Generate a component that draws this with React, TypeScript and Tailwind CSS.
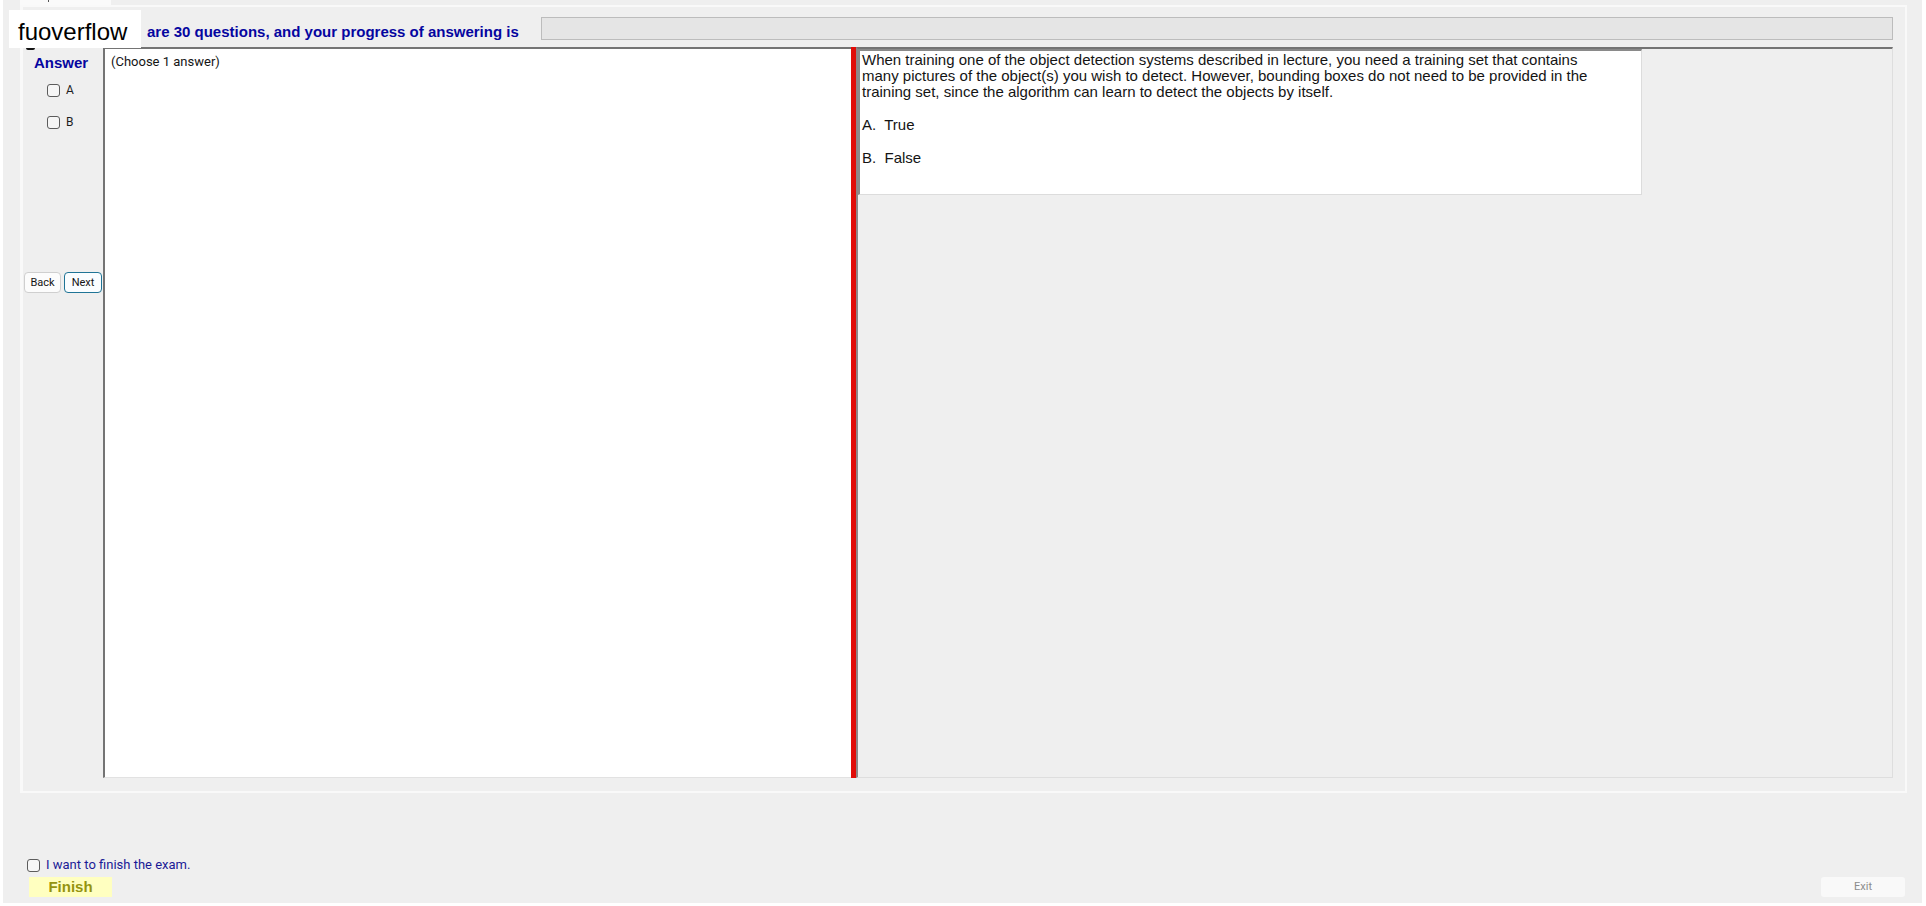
import { useState } from 'react';

const choices = ['A', 'B'];

const checkboxClass =
  'size-[13px] shrink-0 appearance-none rounded-[3px] border border-[#5c5c5c] bg-[#f6f6f6] checked:bg-[#0067c0]';

function AnswerColumn() {
  const [selected, setSelected] = useState<string[]>([]);

  const toggle = (choice: string) => {
    setSelected((prev) =>
      prev.includes(choice) ? prev.filter((c) => c !== choice) : [...prev, choice]
    );
  };

  return (
    <aside className="flex w-20 shrink-0 flex-col">
      <h2 className="mt-2 pl-[11px] text-[15px] leading-4 font-bold text-[#0505a0]">Answer</h2>
      <div className="mt-[11px] flex flex-col gap-4 pl-6">
        {choices.map((choice) => (
          <label
            key={choice}
            className="flex h-4 items-center gap-[6px] font-['Roboto',sans-serif] text-xs text-[#1e1e1e]"
          >
            <input
              type="checkbox"
              className={checkboxClass}
              checked={selected.includes(choice)}
              onChange={() => toggle(choice)}
            />
            {choice}
          </label>
        ))}
      </div>
      <div className="mt-[142px] flex gap-[3px] pl-px font-['Roboto',sans-serif] text-[11px] leading-5 text-[#141414]">
        <button className="h-[21px] w-[37px] rounded-[4px] border border-[#cfcfcf] bg-[#fcfcfc]">
          Back
        </button>
        <button className="h-[21px] w-[38px] rounded-[4px] border border-[#1f7496] bg-[#fafdff]">
          Next
        </button>
      </div>
    </aside>
  );
}

function Question() {
  return (
    <article className="w-[784px] max-w-full border-t-2 border-r border-b border-l-2 border-t-[#8a8a8a] border-r-[#dcdcdc] border-b-[#dcdcdc] border-l-[#8a8a8a] bg-white pb-7 pl-[2px] text-[15px] leading-4 text-[#141414]">
      <p className="pt-px">
        When training one of the object detection systems described in lecture, you need a training set that contains
        <br />
        many pictures of the object(s) you wish to detect. However, bounding boxes do not need to be provided in the
        <br />
        training set, since the algorithm can learn to detect the objects by itself.
      </p>
      <p className="mt-[17px] whitespace-pre">A.  True</p>
      <p className="mt-[17px] whitespace-pre">B.  False</p>
    </article>
  );
}

export default function App() {
  const [finish, setFinish] = useState(false);

  return (
    <div className="flex min-h-screen flex-col bg-white pr-1 pb-[3px] pl-[3px] font-['Liberation_Sans',Arial,sans-serif]">
      <div className="relative flex flex-1 flex-col bg-[#efefef] pr-[15px] pl-[17px]">
        {/* selected tab, scrolled almost out of view */}
        <div className="flex h-[5px] w-[91px] bg-[#fafafa] pl-7">
          <span className="h-[2px] w-px bg-[#555]"></span>
        </div>

        <main className="flex flex-1 flex-col border-t-2 border-r-2 border-b-2 border-l-[3px] border-[#f9f9f9] pr-3 pb-[13px]">
          <header className="flex h-10 items-start pt-[10px] pl-[124px]">
            <label
              htmlFor="progress"
              className="w-[378px] pt-[7px] text-[15px] leading-4 font-bold whitespace-nowrap text-[#0505a0]"
            >
              are 30 questions, and your progress of answering is
            </label>
            <div
              id="progress"
              role="progressbar"
              aria-valuenow={0}
              className="ml-4 h-[23px] flex-1 border border-[#bcbcbc] bg-[#e5e5e5]"
            ></div>
          </header>

          <div className="flex flex-1">
            <AnswerColumn />
            <section className="w-[748px] shrink-0 border-t-2 border-b border-l-2 border-t-[#747474] border-b-[#e2e2e2] border-l-[#747474] bg-white pt-[5px] pl-[6px] font-['Roboto',sans-serif] text-[13px] leading-4 text-[#141414]">
              (Choose 1 answer)
            </section>
            <div className="w-[5px] shrink-0 cursor-col-resize bg-[#e00c08]"></div>
            <section className="min-w-0 flex-1 border-t-2 border-r border-b border-l-2 border-t-[#747474] border-r-[#dedede] border-b-[#dedede] border-l-[#8f8686]">
              <Question />
            </section>
          </div>
        </main>

        <footer className="flex items-end justify-between pt-16 pr-[2px] pb-[6px]">
          <div className="pl-[7px]">
            <label className="flex items-center gap-[6px] font-['Roboto',sans-serif] text-[13px] leading-4 text-[#1a1a96]">
              <input
                type="checkbox"
                className={checkboxClass}
                checked={finish}
                onChange={(e) => setFinish(e.target.checked)}
              />
              I want to finish the exam.
            </label>
            <button className="mt-1 ml-[2px] block h-5 w-[83px] bg-[#ffffc0] text-[15px] leading-5 font-bold text-[#94940f]">
              Finish
            </button>
          </div>
          <button
            disabled={!finish}
            className="h-5 w-[84px] rounded-[3px] bg-[#f9f9f9] font-['Roboto',sans-serif] text-[11px] text-[#8c8c8c]"
          >
            Exit
          </button>
        </footer>

        <div className="absolute top-12 left-[23px] h-[2px] w-[9px] rounded-b-full bg-[#141414]"></div>
        <div className="absolute top-[10px] left-[6px] h-[38px] w-[132px] bg-white pt-2 pl-[9px] text-2xl leading-7 text-black">
          fuoverflow
        </div>
      </div>
    </div>
  );
}
